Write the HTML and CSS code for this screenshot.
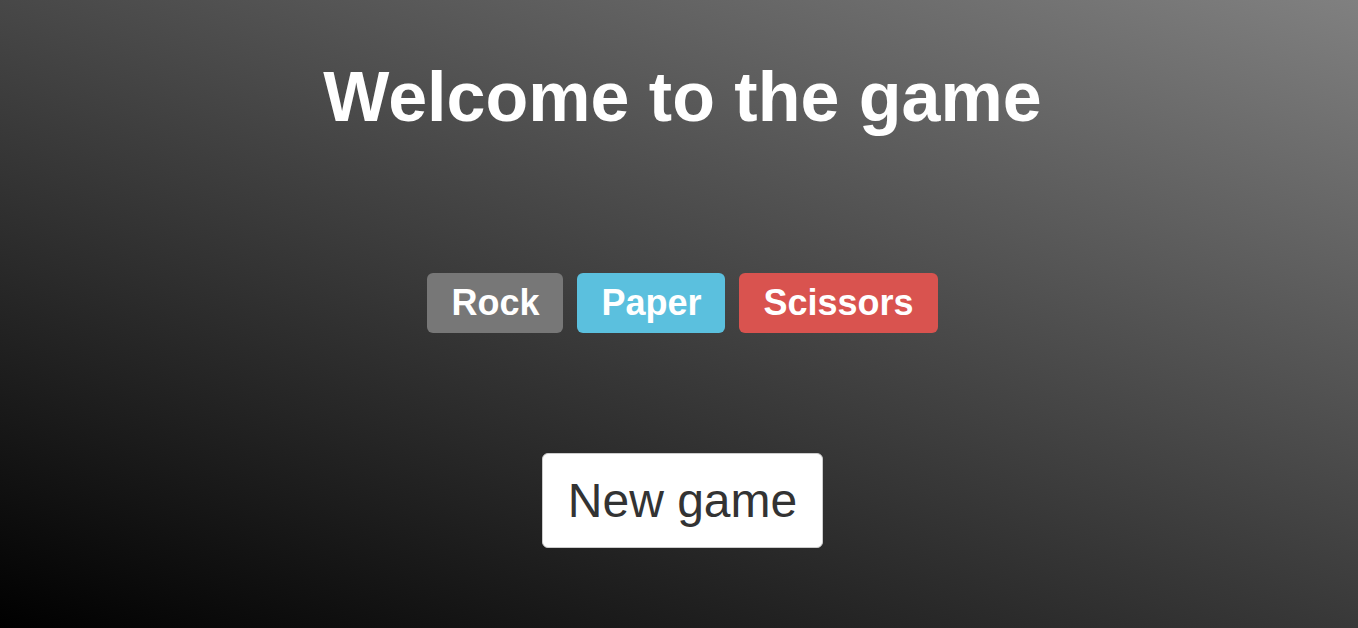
FILE: index.html
```html
<!DOCTYPE html>
<html lang="en">
<head>
<meta charset="utf-8">
<title>Rock Paper Scissors</title>
<link rel="stylesheet" href="styles.css">
</head>
<body>
<main class="game">
  <h1 class="title">Welcome to the game</h1>
  <div class="choices">
    <button class="choice choice-rock">Rock</button>
    <button class="choice choice-paper">Paper</button>
    <button class="choice choice-scissors">Scissors</button>
  </div>
  <button class="new-game">New game</button>
</main>
</body>
</html>
```
FILE: styles.css
```css
html, body {
  margin: 0;
  height: 100%;
}
body {
  background: linear-gradient(20deg, #000000, #808080);
  font-family: "Liberation Sans", Arial, sans-serif;
  overflow: hidden;
}
.game {
  display: flex;
  flex-direction: column;
  align-items: center;
  padding: 57px 0 0 7px;
}
.title {
  margin: 0;
  font-size: 70px;
  line-height: 80px;
  font-weight: bold;
  color: #fff;
}
.choices {
  display: flex;
  gap: 14px;
  margin-top: 136px;
}
.choice {
  font-family: inherit;
  font-size: 36px;
  font-weight: bold;
  color: #fff;
  border: 0;
  border-radius: 6px;
  padding: 8px 24px;
  line-height: 44px;
  cursor: pointer;
}
.choice-rock { background: #777777; }
.choice-paper { background: #5bc0de; }
.choice-scissors { background: #d9534f; }
.new-game {
  margin-top: 120px;
  font-family: inherit;
  font-size: 48px;
  color: #333;
  background: #fff;
  border: 1px solid #ccc;
  border-radius: 6px;
  padding: 14px 25px;
  line-height: 65px;
  cursor: pointer;
}
```
